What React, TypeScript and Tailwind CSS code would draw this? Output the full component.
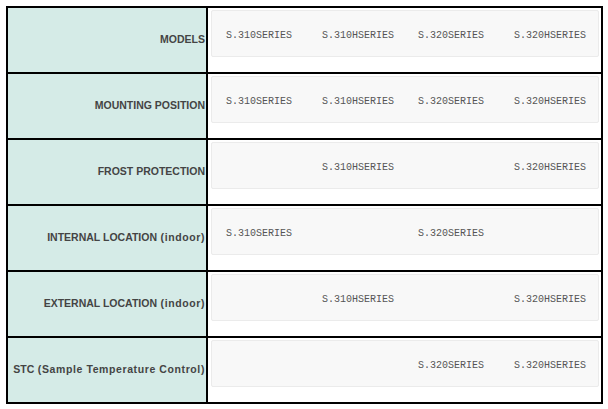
import React from 'react';

const series = ['S.310SERIES', 'S.310HSERIES', 'S.320SERIES', 'S.320HSERIES'];

const rows: { label: string; note?: string; on: boolean[] }[] = [
    { label: 'MODELS', on: [true, true, true, true] },
    { label: 'MOUNTING POSITION', on: [true, true, true, true] },
    { label: 'FROST PROTECTION', on: [false, true, false, true] },
    { label: 'INTERNAL LOCATION', note: '(indoor)', on: [true, false, true, false] },
    { label: 'EXTERNAL LOCATION', note: '(indoor)', on: [false, true, false, true] },
    { label: 'STC', note: '(Sample Temperature Control)', on: [false, false, true, true] },
];

export default function App() {
    return (
        <div className="w-[608px] h-[409px] bg-white pt-[6px] pl-[6px]">
            <div className="w-[597px] border-2 border-black flex flex-col">
                {rows.map((row, i) => (
                    <div
                        key={row.label}
                        className={`flex ${i < rows.length - 1 ? 'h-[66px] border-b-2 border-black' : 'h-[64px]'}`}
                    >
                        {/* label cell */}
                        <div className="w-[198px] shrink-0 bg-[#d5ebe7] flex items-center justify-end pr-[1px] text-[10.5px] font-bold text-[#444] font-['Liberation_Sans',Arial,sans-serif] whitespace-pre">
                            {row.label}
                            {row.note && <span className="tracking-[0.6px]"> {row.note}</span>}
                        </div>
                        {/* values cell */}
                        <div className="flex-1 min-w-0 border-l-2 border-black pt-[2px] pl-[3px] pr-[2px]">
                            <div className="h-[47px] bg-[#f8f8f8] border border-[#ebebeb] rounded-[2px] pl-[14px] pt-[3px] flex items-center font-['Liberation_Mono','Courier_New',monospace] text-[10px] text-[#555] overflow-hidden">
                                {series.map((s, j) => (
                                    <span key={s} className={`${j < 3 ? 'w-[96px]' : ''} shrink-0 whitespace-pre`}>
                                        {row.on[j] ? s : ''}
                                    </span>
                                ))}
                            </div>
                        </div>
                    </div>
                ))}
            </div>
        </div>
    );
}
